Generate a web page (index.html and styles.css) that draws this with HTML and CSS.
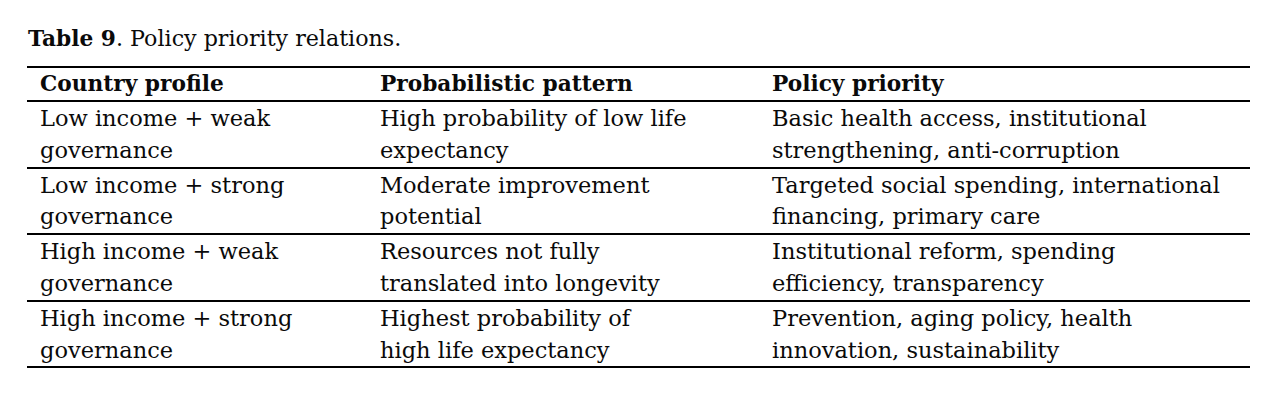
FILE: index.html
```html
<!DOCTYPE html>
<html lang="en">
<head>
<meta charset="utf-8">
<title>Table 9</title>
<link rel="stylesheet" href="styles.css">
</head>
<body>
<div class="wrap">
  <p class="caption"><b>Table 9</b>. Policy priority relations.</p>
  <table class="tbl">
    <colgroup>
      <col class="c1"><col class="c2"><col class="c3">
    </colgroup>
    <thead>
      <tr><th>Country profile</th><th>Probabilistic pattern</th><th>Policy priority</th></tr>
    </thead>
    <tbody>
      <tr><td>Low income + weak<br>governance</td><td>High probability of low life<br>expectancy</td><td>Basic health access, institutional<br>strengthening, anti-corruption</td></tr>
      <tr><td>Low income + strong<br>governance</td><td>Moderate improvement<br>potential</td><td>Targeted social spending, international<br>financing, primary care</td></tr>
      <tr><td>High income + weak<br>governance</td><td>Resources not fully<br>translated into longevity</td><td>Institutional reform, spending<br>efficiency, transparency</td></tr>
      <tr><td>High income + strong<br>governance</td><td>Highest probability of<br>high life expectancy</td><td>Prevention, aging policy, health<br>innovation, sustainability</td></tr>
    </tbody>
  </table>
</div>
</body>
</html>
```
FILE: styles.css
```css
html, body { margin: 0; padding: 0; background: #fff; }
body { font-family: "DejaVu Serif", "Liberation Serif", serif; color: #0a0a0a; }
.wrap { padding: 25px 24px 0 27px; }
.caption { margin: 0 0 14px 1px; font-size: 22.2px; line-height: 26px; }
.caption b { font-weight: bold; font-size: 21.7px; }
.tbl { border-collapse: collapse; width: 1223px; font-size: 22.5px; }
.c1 { width: 340px; } .c2 { width: 392px; } .c3 { width: 491px; }
.tbl th, .tbl td { text-align: left; vertical-align: top; padding: 0 0 0 13px; }
.tbl th { font-weight: bold; font-size: 21.7px; line-height: 32px; border-top: 2px solid #000; border-bottom: 2px solid #000; }
.tbl td { padding-top: 1px; line-height: 31.8px; border-bottom: 2px solid #000; }
```
